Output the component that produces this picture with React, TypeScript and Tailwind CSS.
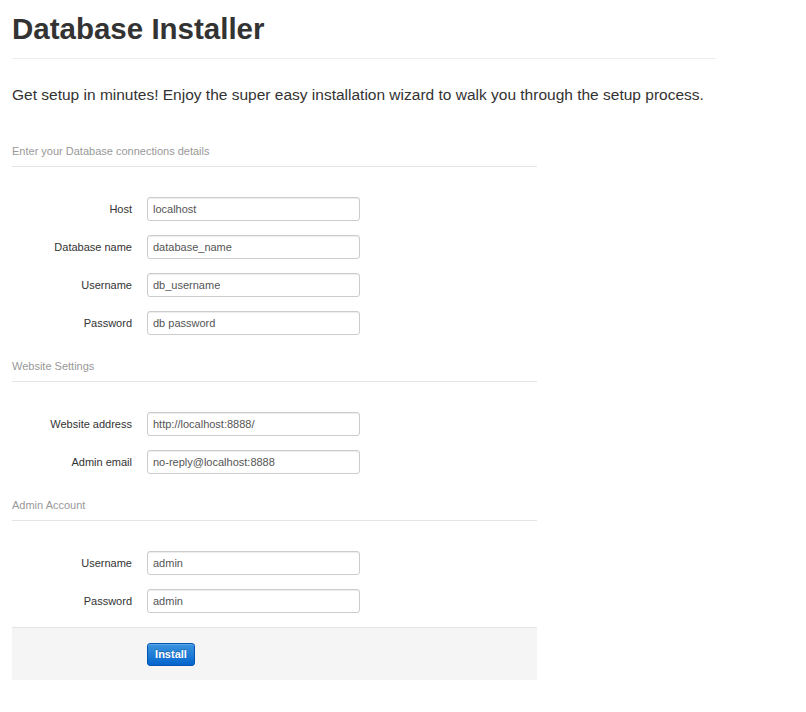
import React from "react";

type Field = { label: string; value: string };

const sections: { title: string; fields: Field[] }[] = [
  {
    title: "Enter your Database connections details",
    fields: [
      { label: "Host", value: "localhost" },
      { label: "Database name", value: "database_name" },
      { label: "Username", value: "db_username" },
      { label: "Password", value: "db password" },
    ],
  },
  {
    title: "Website Settings",
    fields: [
      { label: "Website address", value: "http://localhost:8888/" },
      { label: "Admin email", value: "no-reply@localhost:8888" },
    ],
  },
  {
    title: "Admin Account",
    fields: [
      { label: "Username", value: "admin" },
      { label: "Password", value: "admin" },
    ],
  },
];

function FieldRow({ field }: { field: Field }) {
  return (
    <div className="flex items-center">
      <label className="w-[120px] text-right text-[11px] text-[#333]">{field.label}</label>
      <input
        defaultValue={field.value}
        className="ml-[15px] h-[24px] w-[213px] rounded-[3px] border border-[#ccc] bg-white px-[5px] text-[11px] text-[#555] shadow-[inset_0_1px_1px_rgba(0,0,0,0.075)] outline-none"
      />
    </div>
  );
}

export default function App() {
  return (
    <div className="min-h-[712px] bg-white px-[12px] pt-[11px] font-['Liberation_Sans',Arial,sans-serif] text-[#333]">
      <div className="w-[704px]">
        <h1 className="border-b border-[#eee] pb-[11px] text-[29.5px] leading-[36px] font-bold text-[#333]">
          Database Installer
        </h1>
        <p className="mt-[24px] whitespace-nowrap text-[15.5px] leading-[24px] text-[#333]">
          Get setup in minutes! Enjoy the super easy installation wizard to walk you through the setup process.
        </p>
      </div>

      <form className="mt-[34px] w-[525px]">
        {sections.map((section, i) => (
          <fieldset key={section.title} className={i === 0 ? "" : "mt-[21px]"}>
            <legend className="w-full border-b border-[#e5e5e5] pb-[5px] text-[11px] leading-[20px] text-[#999]">
              {section.title}
            </legend>
            <div className="flex flex-col gap-[14px] pt-[30px]">
              {section.fields.map((f) => (
                <FieldRow key={f.label + f.value} field={f} />
              ))}
            </div>
          </fieldset>
        ))}

        <div className="mt-[14px] h-[53px] border-t border-[#e5e5e5] bg-[#f5f5f5] pt-[13px] pl-[135px]">
          <button
            type="button"
            className="h-[23px] w-[48px] rounded-[3px] border border-[#0055b3] bg-gradient-to-b from-[#3a95e0] to-[#0064cc] text-[11px] font-bold text-white shadow-[inset_0_1px_0_rgba(255,255,255,0.2)] [text-shadow:0_-1px_0_rgba(0,0,0,0.25)]"
          >
            Install
          </button>
        </div>
      </form>
    </div>
  );
}
